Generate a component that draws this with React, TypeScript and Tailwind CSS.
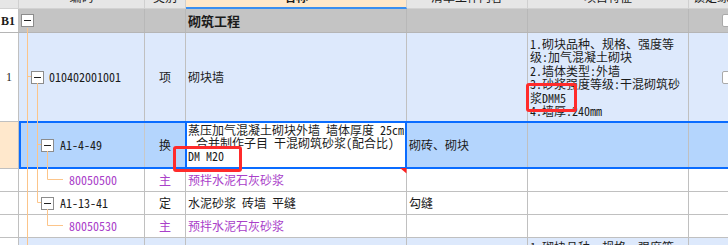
import React from "react"

const cjk = "font-['Noto_Sans_Mono_CJK_SC','Noto_Sans_CJK_SC',monospace]"
const serif = "font-['Liberation_Serif',serif]"
const cols = "grid grid-cols-[19px_126px_41px_221px_121px_161px_1fr]"

function Minus() {
  return (
    <span className="flex h-[13px] w-[13px] shrink-0 items-center justify-center border border-[#8c8c8c] bg-white">
      <span className="h-px w-[7px] bg-[#222]" />
    </span>
  )
}

function Check() {
  return <span className="h-[13px] w-[13px] shrink-0 rounded-[2px] border border-[#a9a9a9] bg-white" />
}

const features = [
  "1.砌块品种、规格、强度等",
  "级:加气混凝土砌块",
  "2.墙体类型:外墙",
  "3.砂浆强度等级:干混砌筑砂",
  "浆DMM5",
  "4.墙厚:240mm",
]

export default function App() {
  return (
    <div className={`relative h-[245px] w-[728px] overflow-hidden bg-white text-[12px] text-[#1b1b1b] ${cjk}`}>
      <div className="-mt-[13px]">
        {/* header */}
        <div className={`${cols} h-[22px] border-b border-[#d2d2d2] bg-[#e6e6e6] leading-[20px]`}>
          <div className="border-r border-[#d0d0d0]" />
          <div className="border-r border-[#d0d0d0] text-center">编码</div>
          <div className="border-r border-[#d0d0d0] text-center">类别</div>
          <div className="border-r border-b-2 border-[#d0d0d0] border-b-[#3a8ff0] bg-[#ffe8ca] text-center font-bold">名称</div>
          <div className="border-r border-[#d0d0d0] text-center">清单工作内容</div>
          <div className="border-r border-[#d0d0d0] text-center">项目特征</div>
          <div className="overflow-hidden whitespace-nowrap pl-[4px]">锁定综合单价</div>
        </div>

        {/* B1 */}
        <div className={`${cols} h-[24px] border-b border-[#b5b5b5] bg-[#c4c4c4]`}>
          <div className={`flex items-center border-r border-[#c0c0c0] bg-white pl-[1px] text-[12px] font-bold ${serif}`}>B1</div>
          <div className="flex items-center border-r border-[#b8b8b8] pl-[2px]">
            <Minus />
          </div>
          <div className="border-r border-[#b8b8b8]" />
          <div className="flex items-center border-r border-[#b8b8b8] pl-[2px] text-[13px] font-bold">砌筑工程</div>
          <div className="border-r border-[#b8b8b8]" />
          <div className="border-r border-[#b8b8b8]" />
          <div className="flex items-center pl-[33px]">
            <Check />
          </div>
        </div>

        {/* 1 */}
        <div className={`${cols} h-[88px] bg-[#dde9fc]`}>
          <div className={`flex items-center justify-center border-r border-[#c0c0c0] bg-white ${serif}`}>1</div>
          <div className="flex items-center gap-[5px] border-r border-[#c0c0c0] pl-[12px]">
            <Minus />
            <span>010402001001</span>
          </div>
          <div className="flex items-center justify-center border-r border-[#c0c0c0]">项</div>
          <div className="flex items-center border-r border-[#c0c0c0] pl-[2px]">砌块墙</div>
          <div className="border-r border-[#c0c0c0]" />
          <div className="flex flex-col justify-center border-r border-[#c0c0c0] pl-[2px] leading-[13.5px]">
            {features.map((f) => (
              <div key={f} className="whitespace-nowrap">{f}</div>
            ))}
          </div>
          <div className="flex items-center pl-[33px]">
            <Check />
          </div>
        </div>

        {/* selected row */}
        <div className="flex h-[48px]">
          <div className="w-[19px] shrink-0 border-y border-r border-[#c0c0c0] bg-[#ffe8cc]" />
          <div className="grid flex-1 grid-cols-[124px_40px_222px_121px_161px_1fr] border-y-2 border-l-2 border-[#0a6cff] bg-[#b4d5fd]">
            <div className="flex items-center gap-[6px] border-r border-[#c8c8c8] pl-[20px]">
              <Minus />
              <span>A1-4-49</span>
            </div>
            <div className="flex items-center justify-center">换</div>
            <div className="border-x-2 border-[#0a6cff] bg-white pl-[1px] leading-[13px]">
              <div className="whitespace-nowrap">蒸压加气混凝土砌块外墙 墙体厚度 25cm</div>
              <div className="whitespace-nowrap pl-[8px]">合并制作子目 干混砌筑砂浆(配合比)</div>
              <div className="whitespace-nowrap">DM M20</div>
            </div>
            <div className="flex items-center border-r border-[#c0c0c0] pl-[2px]">砌砖、砌块</div>
            <div className="border-r border-[#c0c0c0]" />
            <div />
          </div>
        </div>

        {/* 80050500 */}
        <div className={`${cols} h-[23px] border-b border-[#c0c0c0] text-[#a940c9]`}>
          <div className="border-r border-[#c0c0c0]" />
          <div className="flex items-center border-r border-[#c0c0c0] pl-[50px]">80050500</div>
          <div className="flex items-center justify-center border-r border-[#c0c0c0]">主</div>
          <div className="flex items-center border-r border-[#c0c0c0] pl-[2px]">预拌水泥石灰砂浆</div>
          <div className="border-r border-[#c0c0c0]" />
          <div className="border-r border-[#c0c0c0]" />
          <div />
        </div>

        {/* A1-13-41 */}
        <div className={`${cols} h-[23px] border-b border-[#c0c0c0]`}>
          <div className="border-r border-[#c0c0c0]" />
          <div className="flex items-center gap-[6px] border-r border-[#c0c0c0] pl-[22px]">
            <Minus />
            <span>A1-13-41</span>
          </div>
          <div className="flex items-center justify-center border-r border-[#c0c0c0]">定</div>
          <div className="flex items-center border-r border-[#c0c0c0] pl-[2px]">水泥砂浆 砖墙 平缝</div>
          <div className="flex items-center border-r border-[#c0c0c0] pl-[2px]">勾缝</div>
          <div className="border-r border-[#c0c0c0]" />
          <div />
        </div>

        {/* 80050530 */}
        <div className={`${cols} h-[23px] border-b border-[#c0c0c0] text-[#a940c9]`}>
          <div className="border-r border-[#c0c0c0]" />
          <div className="flex items-center border-r border-[#c0c0c0] pl-[50px]">80050530</div>
          <div className="flex items-center justify-center border-r border-[#c0c0c0]">主</div>
          <div className="flex items-center border-r border-[#c0c0c0] pl-[2px]">预拌水泥石灰砂浆</div>
          <div className="border-r border-[#c0c0c0]" />
          <div className="border-r border-[#c0c0c0]" />
          <div />
        </div>

        {/* next row, cut off */}
        <div className={`${cols} h-[30px] bg-[#dde9fc]`}>
          <div className="border-r border-[#c0c0c0] bg-white" />
          <div className="border-r border-[#c0c0c0]" />
          <div className="border-r border-[#c0c0c0]" />
          <div className="border-r border-[#c0c0c0]" />
          <div className="border-r border-[#c0c0c0]" />
          <div className="whitespace-nowrap border-r border-[#c0c0c0] pl-[2px] pt-[2px] leading-[13.5px]">1.砌块品种、规格、强度等</div>
          <div />
        </div>
      </div>

      {/* tree connectors */}
      <svg className="pointer-events-none absolute left-0 top-0" width="728" height="245">
        <g stroke="#fcc58a" strokeWidth="1" fill="none">
          <path d="M27.5 28 V245" />
          <path d="M27 76.5 H31" />
          <path d="M37.5 83 V202.5 H41" />
          <path d="M37 144.5 H41" />
          <path d="M47.5 151 V179.5 H63" />
          <path d="M47.5 209 V225.5 H63" />
        </g>
      </svg>

      {/* comment marker */}
      <svg className="pointer-events-none absolute left-[400px] top-[168px]" width="7" height="6">
        <polygon points="0,0 6.5,0 6.5,5.5" fill="#ff2020" />
      </svg>

      {/* red annotation boxes */}
      <div className="pointer-events-none absolute left-[173px] top-[146px] h-[26px] w-[69px] rounded-[3px] border-[3px] border-[#ff2b2b]" />
      <div className="pointer-events-none absolute left-[526px] top-[83px] h-[29px] w-[51px] rounded-[3px] border-[3px] border-[#ff2b2b]" />
    </div>
  )
}
